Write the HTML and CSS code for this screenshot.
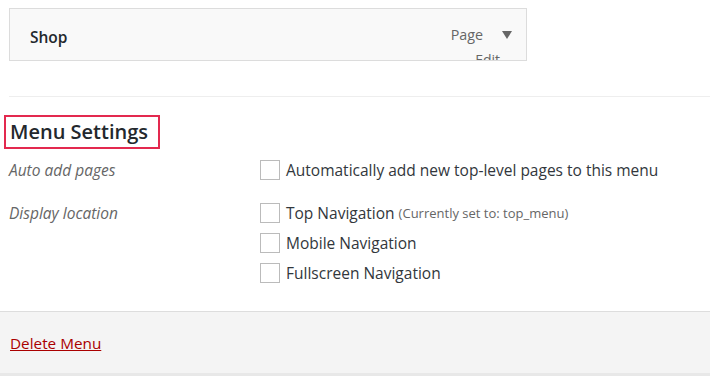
FILE: index.html
```html
<!DOCTYPE html>
<html lang="en">
<head>
    <meta charset="UTF-8">
    <meta name="viewport" content="width=device-width, initial-scale=1.0">
    <title>Menu Settings</title>
    <link rel="stylesheet" href="styles.css">
</head>
<body>
    <div class="menu-item">
        <span class="item-title">Shop</span>
        <div class="item-controls">
            <div class="item-type-row">
                <span class="item-type">Page</span>
                <span class="item-arrow"></span>
            </div>
            <a class="item-edit" href="#">Edit</a>
        </div>
    </div>

    <div class="menu-settings">
        <h3 class="settings-title">Menu Settings</h3>
        <div class="setting-row">
            <div class="setting-label">Auto add pages</div>
            <div class="setting-input">
                <label class="check"><input type="checkbox"> Automatically add new top-level pages to this menu</label>
            </div>
        </div>
        <div class="setting-row">
            <div class="setting-label">Display location</div>
            <div class="setting-input">
                <label class="check"><input type="checkbox"> Top Navigation <span class="theme-location">(Currently set to: top_menu)</span></label>
                <label class="check"><input type="checkbox"> Mobile Navigation</label>
                <label class="check"><input type="checkbox"> Fullscreen Navigation</label>
            </div>
        </div>
    </div>

    <div class="footer">
        <a class="delete-link" href="#">Delete Menu</a>
    </div>
</body>
</html>
```

FILE: styles.css
```css
body {
    margin: 0;
    font-family: "Open Sans", "Noto Sans", sans-serif;
    font-size: 15.5px;
    color: #32373c;
    background: #fff;
}
.menu-item {
    display: flex;
    justify-content: space-between;
    box-sizing: border-box;
    width: 518px;
    height: 53px;
    margin: 8px 0 0 9px;
    padding: 0 14px 0 20px;
    background: #f9f9f9;
    border: 1px solid #dcdcdc;
    overflow: hidden;
}
.item-title {
    margin-top: 17px;
    font-weight: 600;
    font-size: 15.5px;
    color: #23282d;
}
.item-controls {
    display: flex;
    flex-direction: column;
    align-items: flex-end;
    padding-top: 16px;
}
.item-type-row {
    display: flex;
    align-items: center;
    height: 20px;
}
.item-type {
    color: #666;
    font-size: 14.3px;
}
.item-arrow {
    width: 0;
    height: 0;
    margin-left: 19px;
    border-left: 5px solid transparent;
    border-right: 5px solid transparent;
    border-top: 8px solid #666;
}
.item-edit {
    margin-top: 6px;
    margin-right: 12px;
    color: #666;
    font-size: 14px;
    text-decoration: none;
}
.menu-settings {
    margin: 35px 0 0 9px;
    padding: 18px 0 5px;
    border-top: 1px solid #eee;
}
.settings-title {
    display: inline-block;
    margin: 0 0 11px -5px;
    padding: 0 10px 0 4px;
    height: 30px;
    line-height: 29px;
    font-size: 20px;
    font-weight: 600;
    color: #23282d;
    border: 2px solid #e3294f;
}
.setting-row {
    display: flex;
    margin-bottom: 23px;
}
.setting-label {
    width: 251px;
    font-style: italic;
    color: #666;
    line-height: 20px;
}
.setting-input {
    display: flex;
    flex-direction: column;
    gap: 10px;
}
.check {
    display: flex;
    align-items: center;
    line-height: 20px;
    color: #32373c;
    font-size: 15.5px;
}
.check input {
    appearance: none;
    width: 20px;
    height: 20px;
    margin: 0 6px 0 0;
    border: 1px solid #bbb;
    background: #fff;
    box-sizing: border-box;
}
.theme-location {
    margin-left: 4px;
    font-size: 13px;
    color: #666;
}
.footer {
    height: 61px;
    display: flex;
    align-items: center;
    padding-left: 10px;
    background: #f4f4f4;
    border-top: 1px solid #ddd;
    border-bottom: 3px solid #e8e8e8;
}
.delete-link {
    color: #a00;
    font-size: 15.3px;
    text-decoration: underline;
}
```
